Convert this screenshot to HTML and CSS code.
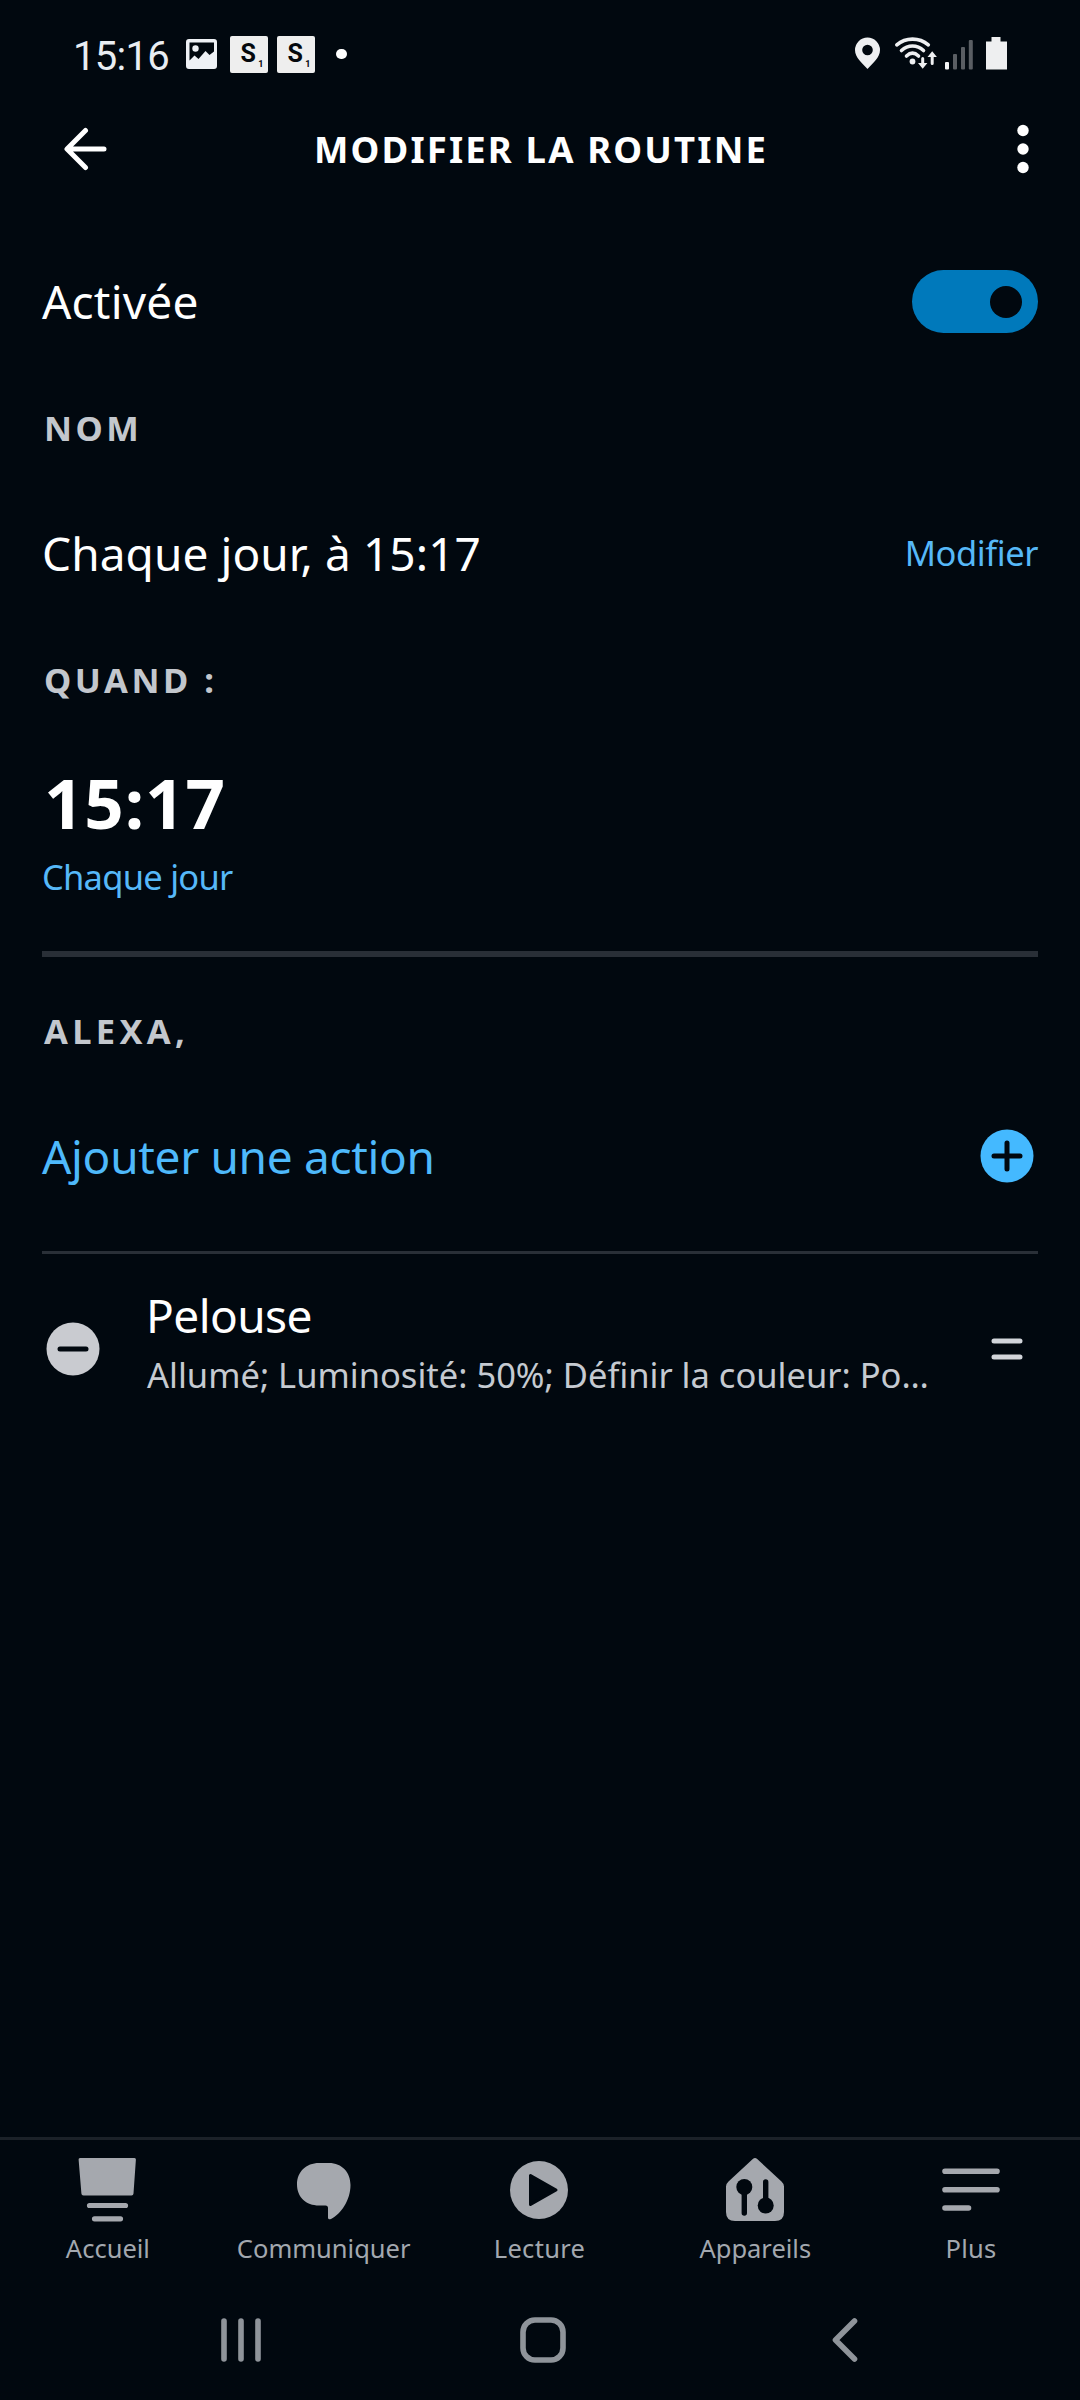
FILE: index.html
```html
<!DOCTYPE html>
<html lang="fr">
<head>
<meta charset="utf-8">
<title>Modifier la routine</title>
<link rel="stylesheet" href="styles.css">
</head>
<body>
<div class="statusbar">
  <span class="clock">15:16</span>
  <svg class="photo" width="31" height="30" viewBox="0 0 31 30"><path fill="#eef1f5" fill-rule="evenodd" d="M3 0h25a3 3 0 0 1 3 3v24a3 3 0 0 1-3 3H3a3 3 0 0 1-3-3V3a3 3 0 0 1 3-3zM3.500 3.500v18l5-5 4 3.500 7-8 4 4 4.500-3.500V3.500z"/><circle cx="9.500" cy="9.500" r="3.200" fill="#eef1f5"/></svg>
  <span class="tile">S<small>1</small></span>
  <span class="tile">S<small>1</small></span>
  <span class="more-dot"></span>
  <svg class="system-icons" width="156" height="36" viewBox="0 0 156 36">
    <path fill="#eeeff1" fill-rule="evenodd" d="M12.500 1.500A12.500 12.500 0 0 0 0 14c0 7.500 7 13 12.500 19C18 27 25 21.500 25 14A12.500 12.500 0 0 0 12.500 1.500zm0 7.200a5.300 5.300 0 1 1 0 10.600 5.300 5.300 0 0 1 0-10.600z"/>
    <g fill="none" stroke="#eeeff1" stroke-width="3.600" stroke-linecap="round">
      <path d="M41.800 8.800c9-7.600 22.500-7.600 31.500 0M46.500 14.500c6.500-6 15.500-6 22 0M51.500 20c3.800-3.500 8.200-3.500 12 0"/>
      <path d="M67.700 22.500v7M77.200 20v7.500" stroke-width="3"/>
    </g>
    <circle cx="57.500" cy="25.500" r="2.900" fill="#eeeff1"/>
    <path fill="#eeeff1" d="M63 27h9.400l-4.700 5.800zM72.500 21h9.400l-4.700-5.800z"/>
    <rect x="90" y="26" width="4" height="7.500" rx="1" fill="#f4f5f6"/>
    <g fill="#5a5e63"><rect x="98" y="18" width="4" height="15.500" rx="1"/><rect x="106" y="11" width="4" height="22.500" rx="1"/><rect x="113.800" y="4" width="4" height="29.500" rx="1"/></g>
    <path fill="#eeeff0" d="M136.500 1h9v4.500h6.500V33.500h-21V5.500h5.500z"/>
  </svg>
</div>

<header class="topbar">
  <svg width="44" height="44" viewBox="0 0 44 44" fill="none" stroke="#fff" stroke-width="5" stroke-linecap="round" stroke-linejoin="round"><path d="M41 22H4.500M22.500 3.500L4 22l18.500 18.500"/></svg>
  <h1>MODIFIER LA ROUTINE</h1>
  <svg width="14" height="52" viewBox="0 0 14 52" fill="#fff"><circle cx="7" cy="7.500" r="5.700"/><circle cx="7" cy="26" r="5.700"/><circle cx="7" cy="44.500" r="5.700"/></svg>
</header>

<main>
  <div class="row enabled"><span class="text">Activée</span><span class="toggle"></span></div>
  <h2 class="heading-name">NOM</h2>
  <div class="row name"><span class="text routine-name">Chaque jour, à 15:17</span><a class="link edit">Modifier</a></div>
  <h2 class="heading-when">QUAND :</h2>
  <div class="time">15:17</div>
  <a class="link repeat">Chaque jour</a>
  <hr class="thick">
  <h2 class="heading-alexa">ALEXA,</h2>
  <div class="row add">
    <span class="text add-label">Ajouter une action</span>
    <svg width="54" height="54" viewBox="0 0 54 54"><circle cx="27" cy="27" r="26.500" fill="#44b9ff"/><path d="M14 27h26M27 14v26" stroke="#01080f" stroke-width="5" stroke-linecap="round"/></svg>
  </div>
  <hr class="thin">
  <div class="action">
    <svg width="54" height="54" viewBox="0 0 54 54"><circle cx="27" cy="27" r="26.500" fill="#c9cbd0"/><path d="M14 27h26" stroke="#01080f" stroke-width="5" stroke-linecap="round"/></svg>
    <div class="action-text">
      <div class="text action-title">Pelouse</div>
      <div class="action-detail">Allumé; Luminosité: 50%; Définir la couleur: Po…</div>
    </div>
    <svg width="32" height="22" viewBox="0 0 32 22" stroke="#d2d5da" stroke-width="5" stroke-linecap="round"><path d="M3 3h26M3 19h26"/></svg>
  </div>
</main>

<nav class="tabs">
  <a class="tab"><svg width="72" height="72" viewBox="0 0 72 72"><path fill="#a5a8ae" d="M8 4h54.500q1.500 0 1.400 1.500L61.500 39.500q-.1 2-2 2h-48q-2 0-2.100-2L6.600 5.500Q6.500 4 8 4z"/><path stroke="#a5a8ae" stroke-width="5.200" stroke-linecap="round" d="M17.500 51.500h36M22.500 64.800h26"/></svg><span>Accueil</span></a>
  <a class="tab"><svg width="72" height="72" viewBox="0 0 72 72"><path fill="#a5a8ae" d="M31 9h10C54 9 62.500 18.500 62.500 31c0 15-9.500 29-19.500 34q-3 1.200-3-1.500V54q0-2.500-2.500-2.500H31C18 51.500 9 43 9 30.500S18 9 31 9z"/></svg><span>Communiquer</span></a>
  <a class="tab"><svg width="72" height="72" viewBox="0 0 72 72"><circle cx="36" cy="36" r="29" fill="#a5a8ae"/><path fill="#01080f" stroke="#01080f" stroke-width="3" stroke-linejoin="round" d="M27.500 21.500v29L53 36z"/></svg><span class="play-label">Lecture</span></a>
  <a class="tab"><svg width="72" height="72" viewBox="0 0 72 72"><path fill="#a5a8ae" d="M33.800 5q2.200-2 4.400 0L62.500 27.500q2.500 2.300 2.500 5V58q0 9-9 9H16q-9 0-9-9V32.500q0-2.700 2.500-5z"/><g fill="#01080f" stroke="#01080f" stroke-width="5.400" stroke-linecap="round"><path d="M25.300 35v24M46.700 28v24"/><g stroke="none"><circle cx="25.300" cy="33" r="8"/><circle cx="46.700" cy="51.500" r="8"/></g></g></svg><span>Appareils</span></a>
  <a class="tab"><svg width="72" height="72" viewBox="0 0 72 72"><path stroke="#a5a8ae" stroke-width="5.600" stroke-linecap="round" d="M10 17.300h52M10 35.700h52M10 54h23.500"/></svg><span class="more-label">Plus</span></a>
</nav>

<div class="navbar">
  <svg class="recents" width="42" height="46" viewBox="0 0 42 46" stroke="#8f949a" stroke-width="5.600" stroke-linecap="round"><path d="M4 4v38M21 4v38M38 4v38"/></svg>
  <svg class="home" width="48" height="48" viewBox="0 0 48 48"><rect x="4" y="4" width="40" height="40" rx="12" fill="none" stroke="#8f949a" stroke-width="5.600"/></svg>
  <svg class="back" width="28" height="46" viewBox="0 0 28 46" fill="none" stroke="#8f949a" stroke-width="5.600" stroke-linecap="round" stroke-linejoin="round"><path d="M23.500 4L4.500 23l19 19"/></svg>
</div>
</body>
</html>
```
FILE: styles.css
```css
* {
  box-sizing: border-box;
}

body {
  margin: 0;
  width: 1080px;
  height: 2400px;
  display: flex;
  flex-direction: column;
  background: #01080f;
  color: #fff;
  font-family: "Noto Sans", sans-serif;
}

svg {
  display: block;
  flex: none;
}

.statusbar {
  height: 108px;
  display: flex;
  align-items: center;
  padding: 0 69px 0 73px;
}

.clock {
  font: 40px Roboto, sans-serif;
  letter-spacing: -0.700px;
  color: #e9edf2;
  width: 113px;
  padding-top: 4px;
}

.photo {
  margin-right: 12.500px;
}

.tile {
  position: relative;
  width: 38px;
  height: 37px;
  margin-right: 9px;
  border-radius: 2px;
  background: #eee;
  color: #05080c;
  font: 700 25px/36px Roboto, sans-serif;
  padding-left: 11px;
}

.tile small {
  position: absolute;
  right: 4px;
  bottom: 4px;
  font-size: 9px;
  line-height: 9px;
}

.more-dot {
  width: 10.500px;
  height: 10.500px;
  margin-left: 12.500px;
  border-radius: 50%;
  background: #fff;
}

.system-icons {
  margin-left: auto;
}

.topbar {
  height: 81px;
  display: flex;
  align-items: center;
  justify-content: space-between;
  padding: 0 50px 0 63px;
}

h1 {
  margin: 0 0 0 -41px;
  font-size: 36.500px;
  line-height: 50px;
  letter-spacing: 2.150px;
  flex: none;
}

main {
  padding: 49px 42px 0;
}

.row {
  display: flex;
  align-items: center;
  justify-content: space-between;
}

.text {
  font-size: 46px;
  line-height: 59px;
}

.enabled {
  height: 127px;
}

.enabled .text {
  letter-spacing: 0.200px;
}

.toggle {
  width: 126px;
  height: 63px;
  border-radius: 32px;
  background: #0079bb;
  display: flex;
  align-items: center;
  justify-content: flex-end;
  padding-right: 16px;
}

.toggle::after {
  content: "";
  width: 32px;
  height: 32px;
  border-radius: 50%;
  background: #01080f;
}

h2 {
  margin: 0;
  font-size: 34.500px;
  letter-spacing: 3.500px;
  color: #c3c7cd;
}

.heading-name {
  line-height: 126px;
  padding-left: 2px;
}

.name {
  height: 124px;
}

.routine-name {
  letter-spacing: 0.080px;
}

.link {
  display: block;
  font-size: 34.500px;
  line-height: 34px;
  color: #56b8f8;
}

.edit {
  letter-spacing: -0.430px;
}

.heading-when {
  line-height: 130px;
  padding-left: 2px;
}

.time {
  font-size: 69px;
  font-weight: 700;
  line-height: 115px;
  letter-spacing: 0.900px;
  padding-left: 2px;
}

.repeat {
  letter-spacing: -0.750px;
}

hr {
  border: 0;
  margin: 0;
  background: #292f37;
}

.thick {
  height: 6px;
  margin-top: 57px;
}

.heading-alexa {
  line-height: 147px;
  letter-spacing: 4.300px;
  padding-left: 2px;
}

.add {
  height: 104px;
  padding-right: 4px;
}

.add-label {
  color: #4eb9fb;
  letter-spacing: -0.320px;
}

.thin {
  height: 3px;
  margin-top: 43px;
}

.action {
  height: 189px;
  display: flex;
  align-items: center;
  padding: 0 15px 0 4px;
}

.action-text {
  flex: 1;
  padding: 0 0 8px 47px;
}

.action-title {
  letter-spacing: -0.570px;
  margin-left: -1px;
}

.action-detail {
  font-size: 34.500px;
  line-height: 59px;
  color: #c5cad1;
  white-space: nowrap;
}

.tabs {
  height: 142px;
  margin-top: auto;
  border-top: 3px solid #1b2128;
  display: grid;
  grid-template-columns: repeat(5, 1fr);
  padding: 14px 1px 0 0;
}

.tab {
  display: flex;
  flex-direction: column;
  align-items: center;
  gap: 4px;
  font-size: 25.500px;
  line-height: 36px;
  color: #a3a8af;
}

.play-label {
  letter-spacing: 0.300px;
}

.more-label {
  letter-spacing: 0.240px;
}

.navbar {
  height: 121px;
  display: flex;
  align-items: center;
}

.recents {
  margin-left: 219.500px;
}

.home {
  margin-left: 257.500px;
}

.back {
  margin-left: 264px;
}
```
